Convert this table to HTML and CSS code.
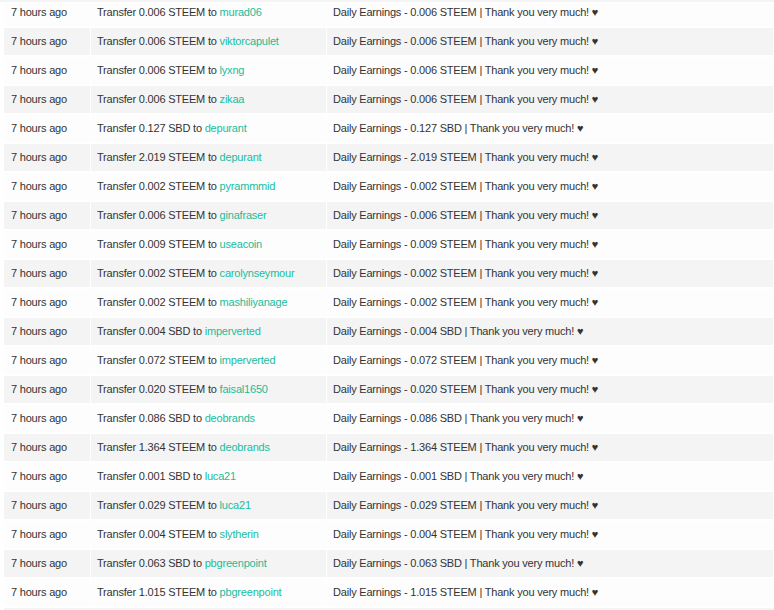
FILE: index.html
```html
<!DOCTYPE html>
<html>
<head>
<meta charset="utf-8">
<link rel="stylesheet" href="styles.css">
</head>
<body>
<div class="wrap">
<table class="tx">
<tbody>
<tr><td class="c-time">7 hours ago</td><td class="c-op">Transfer 0.006 STEEM to <a class="user">murad06</a></td><td class="c-memo">Daily Earnings - 0.006 STEEM | Thank you very much! ♥</td></tr>
<tr><td class="c-time">7 hours ago</td><td class="c-op">Transfer 0.006 STEEM to <a class="user">viktorcapulet</a></td><td class="c-memo">Daily Earnings - 0.006 STEEM | Thank you very much! ♥</td></tr>
<tr><td class="c-time">7 hours ago</td><td class="c-op">Transfer 0.006 STEEM to <a class="user">lyxng</a></td><td class="c-memo">Daily Earnings - 0.006 STEEM | Thank you very much! ♥</td></tr>
<tr><td class="c-time">7 hours ago</td><td class="c-op">Transfer 0.006 STEEM to <a class="user">zikaa</a></td><td class="c-memo">Daily Earnings - 0.006 STEEM | Thank you very much! ♥</td></tr>
<tr><td class="c-time">7 hours ago</td><td class="c-op">Transfer 0.127 SBD to <a class="user">depurant</a></td><td class="c-memo">Daily Earnings - 0.127 SBD | Thank you very much! ♥</td></tr>
<tr><td class="c-time">7 hours ago</td><td class="c-op">Transfer 2.019 STEEM to <a class="user">depurant</a></td><td class="c-memo">Daily Earnings - 2.019 STEEM | Thank you very much! ♥</td></tr>
<tr><td class="c-time">7 hours ago</td><td class="c-op">Transfer 0.002 STEEM to <a class="user">pyrammmid</a></td><td class="c-memo">Daily Earnings - 0.002 STEEM | Thank you very much! ♥</td></tr>
<tr><td class="c-time">7 hours ago</td><td class="c-op">Transfer 0.006 STEEM to <a class="user">ginafraser</a></td><td class="c-memo">Daily Earnings - 0.006 STEEM | Thank you very much! ♥</td></tr>
<tr><td class="c-time">7 hours ago</td><td class="c-op">Transfer 0.009 STEEM to <a class="user">useacoin</a></td><td class="c-memo">Daily Earnings - 0.009 STEEM | Thank you very much! ♥</td></tr>
<tr><td class="c-time">7 hours ago</td><td class="c-op">Transfer 0.002 STEEM to <a class="user">carolynseymour</a></td><td class="c-memo">Daily Earnings - 0.002 STEEM | Thank you very much! ♥</td></tr>
<tr><td class="c-time">7 hours ago</td><td class="c-op">Transfer 0.002 STEEM to <a class="user">mashiliyanage</a></td><td class="c-memo">Daily Earnings - 0.002 STEEM | Thank you very much! ♥</td></tr>
<tr><td class="c-time">7 hours ago</td><td class="c-op">Transfer 0.004 SBD to <a class="user">imperverted</a></td><td class="c-memo">Daily Earnings - 0.004 SBD | Thank you very much! ♥</td></tr>
<tr><td class="c-time">7 hours ago</td><td class="c-op">Transfer 0.072 STEEM to <a class="user">imperverted</a></td><td class="c-memo">Daily Earnings - 0.072 STEEM | Thank you very much! ♥</td></tr>
<tr><td class="c-time">7 hours ago</td><td class="c-op">Transfer 0.020 STEEM to <a class="user">faisal1650</a></td><td class="c-memo">Daily Earnings - 0.020 STEEM | Thank you very much! ♥</td></tr>
<tr><td class="c-time">7 hours ago</td><td class="c-op">Transfer 0.086 SBD to <a class="user">deobrands</a></td><td class="c-memo">Daily Earnings - 0.086 SBD | Thank you very much! ♥</td></tr>
<tr><td class="c-time">7 hours ago</td><td class="c-op">Transfer 1.364 STEEM to <a class="user">deobrands</a></td><td class="c-memo">Daily Earnings - 1.364 STEEM | Thank you very much! ♥</td></tr>
<tr><td class="c-time">7 hours ago</td><td class="c-op">Transfer 0.001 SBD to <a class="user">luca21</a></td><td class="c-memo">Daily Earnings - 0.001 SBD | Thank you very much! ♥</td></tr>
<tr><td class="c-time">7 hours ago</td><td class="c-op">Transfer 0.029 STEEM to <a class="user">luca21</a></td><td class="c-memo">Daily Earnings - 0.029 STEEM | Thank you very much! ♥</td></tr>
<tr><td class="c-time">7 hours ago</td><td class="c-op">Transfer 0.004 STEEM to <a class="user">slytherin</a></td><td class="c-memo">Daily Earnings - 0.004 STEEM | Thank you very much! ♥</td></tr>
<tr><td class="c-time">7 hours ago</td><td class="c-op">Transfer 0.063 SBD to <a class="user">pbgreenpoint</a></td><td class="c-memo">Daily Earnings - 0.063 SBD | Thank you very much! ♥</td></tr>
<tr><td class="c-time">7 hours ago</td><td class="c-op">Transfer 1.015 STEEM to <a class="user">pbgreenpoint</a></td><td class="c-memo">Daily Earnings - 1.015 STEEM | Thank you very much! ♥</td></tr>
</tbody>
</table>
<div class="next-row"></div>
</div>
</body>
</html>
```
FILE: styles.css
```css
html, body {
  margin: 0;
  padding: 0;
  background: #ffffff;
  overflow: hidden;
  height: 610px;
}
.wrap {
  padding-left: 3px;
  border-top: 2px solid #f4f4f4;
}
.tx {
  border-collapse: separate;
  border-spacing: 1px 2px;
  width: 771px;
  font-family: "Liberation Sans", Arial, sans-serif;
  font-size: 11px;
  letter-spacing: -0.2px;
  color: #333333;
}
.tx td {
  height: 27px;
  padding: 0 6px;
  line-height: 13px;
  vertical-align: middle;
  white-space: nowrap;
  background: #fdfdfd;
  box-sizing: border-box;
}
.tx tr:nth-child(even) td {
  background: #f4f4f4;
}
.tx tr:first-child td {
  height: 22px;
  padding-bottom: 5px;
}
.tx td.c-time {
  width: 86px;
  padding-left: 7px;
}
.tx td.c-op {
  width: 235px;
}
.user {
  color: #1abc9c;
  text-decoration: none;
}
.next-row {
  height: 2px;
  margin-left: 1px;
  background: #f4f4f4;
}
```
